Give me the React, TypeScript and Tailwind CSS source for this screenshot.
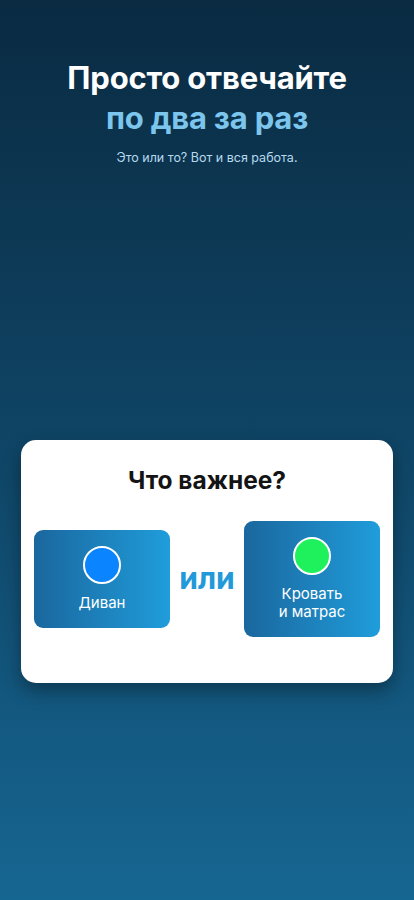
import React from "react";

interface Choice {
  label: string[];
  color: string;
}

const choices: Choice[] = [
  { label: ["Диван"], color: "bg-[#0a84ff]" },
  { label: ["Кровать", "и матрас"], color: "bg-[#1ef15b]" },
];

function ChoiceCard({ choice }: { choice: Choice }) {
  return (
    <div className="w-[136px] shrink-0 rounded-[9px] bg-gradient-to-r from-[#1a679e] to-[#1f9ddb] py-4 flex flex-col items-center gap-[10px]">
      <div className={`w-[38px] h-[38px] rounded-full border-2 border-white ${choice.color}`} />
      <div className="text-white text-[15px] leading-[18px] text-center">
        {choice.label.map((line) => (
          <div key={line}>{line}</div>
        ))}
      </div>
    </div>
  );
}

export default function App() {
  return (
    <div
      className="w-[414px] h-[900px] overflow-hidden bg-gradient-to-b from-[#0a2b42] via-[#0f4566] to-[#166692] flex flex-col"
      style={{ fontFamily: "Inter, 'Noto Sans', sans-serif" }}
    >
      {/* Header */}
      <div className="pt-[58px] flex flex-col items-center text-center">
        <h1 className="text-white font-bold text-[31px] leading-[40px] tracking-[-0.2px]">
          Просто отвечайте
        </h1>
        <h2 className="text-[#7cc5ec] font-bold text-[31px] leading-[40px] tracking-[-0.2px]">
          по два за раз
        </h2>
        <p className="mt-[12px] text-[#b6d9ee] text-[12.5px] leading-[16px]">
          Это или то? Вот и вся работа.
        </p>
      </div>

      {/* Question card */}
      <div className="mt-[274px] mx-[21px] bg-white rounded-[15px] shadow-[0_8px_18px_rgba(0,0,0,0.35)] px-[13px] pt-6 pb-[46px]">
        <h3 className="text-center text-[#141414] font-bold text-[24.5px] leading-[32px]">
          Что важнее?
        </h3>
        <div className="mt-[25px] flex items-center justify-between">
          <ChoiceCard choice={choices[0]} />
          <span className="text-[#2299d8] font-bold text-[30px] leading-none -mt-[2px]">или</span>
          <ChoiceCard choice={choices[1]} />
        </div>
      </div>
    </div>
  );
}
